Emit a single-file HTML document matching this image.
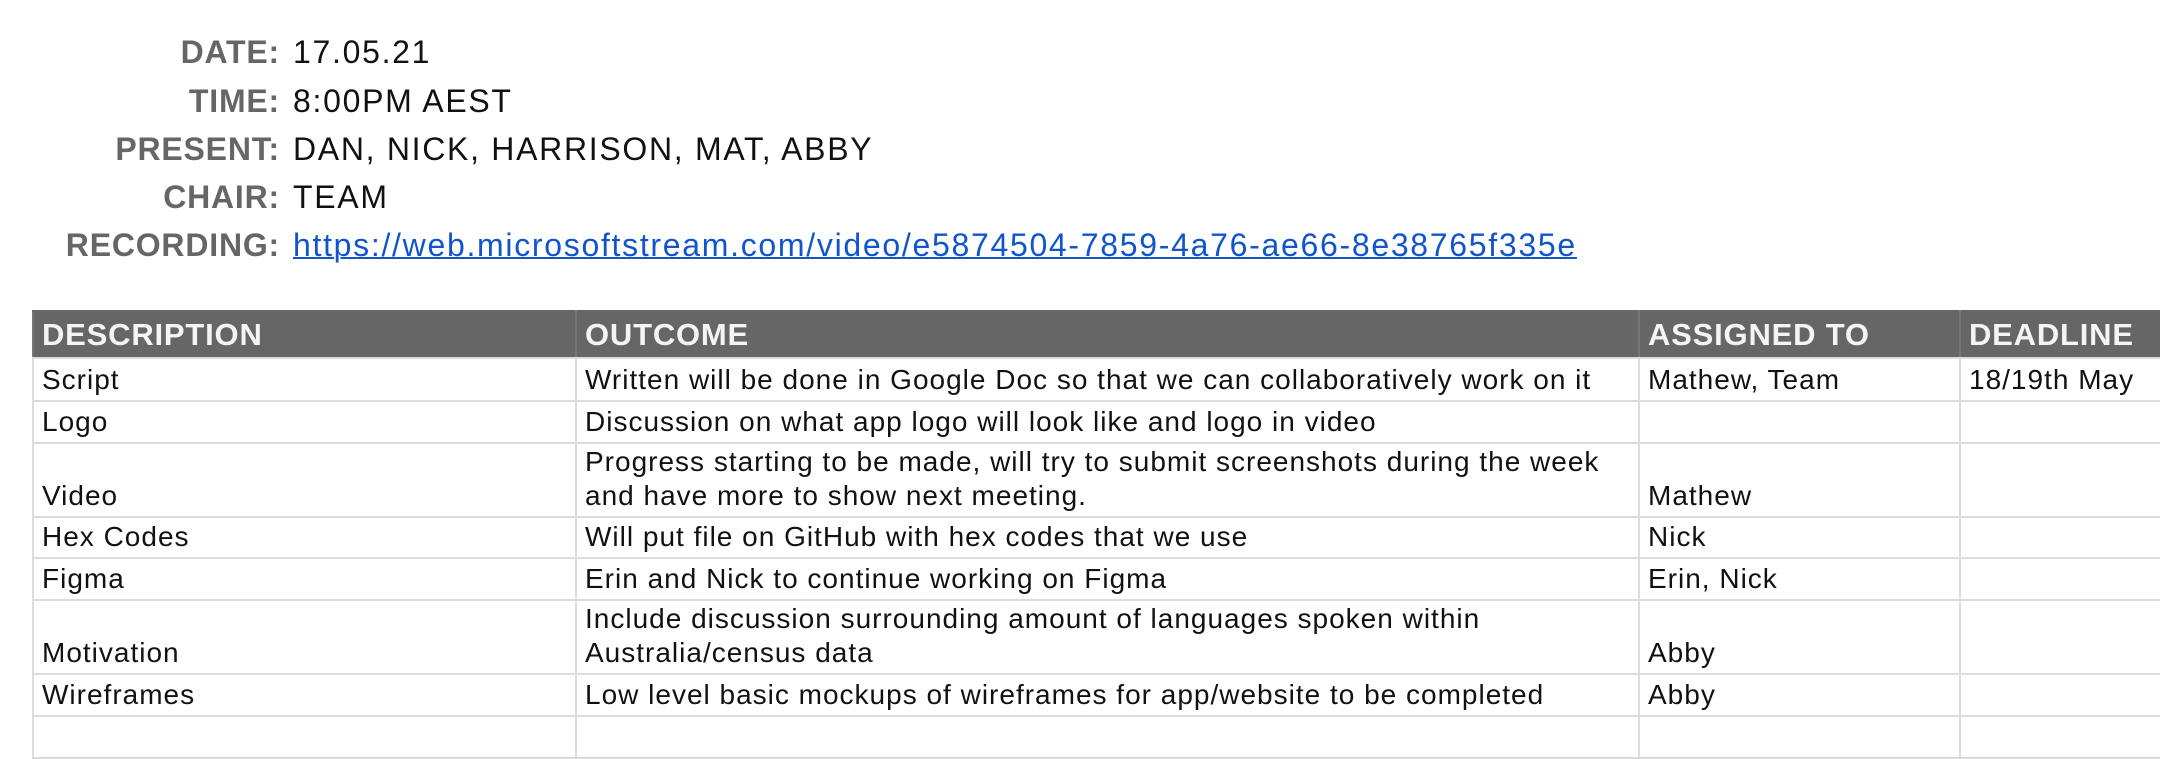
<!DOCTYPE html>
<html><head><meta charset="utf-8"><style>
html,body{margin:0;padding:0;background:#fff;width:2160px;height:726px;overflow:hidden;font-family:"Liberation Sans",sans-serif;}
.meta{position:absolute;left:0;width:2160px;height:48px;font-size:32px;line-height:48px;}
.meta .l{position:absolute;right:1880px;font-weight:bold;color:#666;white-space:nowrap;letter-spacing:0.8px}
.meta .v{position:absolute;left:293px;color:#111;white-space:nowrap;letter-spacing:1.7px}
.meta a{color:#1155cc;text-decoration:underline;text-decoration-thickness:2px;}
table{position:absolute;left:32px;top:310px;border-collapse:collapse;table-layout:fixed;width:2200px;}
td,th{border:2px solid #dcdcdc;padding:0 8px 3px 8px;vertical-align:bottom;font-size:28px;line-height:34px;color:#111;text-align:left;white-space:nowrap;overflow:hidden;letter-spacing:1px}
th{background:#666;color:#f4f4f4;font-weight:bold;font-size:31px;height:45px;border-color:#666 #777 #ddd #777;vertical-align:middle;padding-bottom:0;letter-spacing:0.8px}
</style></head><body>
<div class="meta" style="top:28px"><span class="l">DATE:</span><span class="v">17.05.21</span></div>
<div class="meta" style="top:77px"><span class="l">TIME:</span><span class="v">8:00PM AEST</span></div>
<div class="meta" style="top:125px"><span class="l">PRESENT:</span><span class="v">DAN, NICK, HARRISON, MAT, ABBY</span></div>
<div class="meta" style="top:173px"><span class="l">CHAIR:</span><span class="v">TEAM</span></div>
<div class="meta" style="top:221px"><span class="l">RECORDING:</span><span class="v"><a>https://web.microsoftstream.com/video/e5874504-7859-4a76-ae66-8e38765f335e</a></span></div>
<table>
<colgroup><col style="width:543px"><col style="width:1063px"><col style="width:321px"><col style="width:273px"></colgroup>
<tr><th>DESCRIPTION</th><th>OUTCOME</th><th>ASSIGNED TO</th><th>DEADLINE</th></tr>
<tr style="height:43px"><td>Script</td><td>Written will be done in Google Doc so that we can collaboratively work on it</td><td>Mathew, Team</td><td>18/19th May</td></tr>
<tr style="height:42px"><td>Logo</td><td>Discussion on what app logo will look like and logo in video</td><td></td><td></td></tr>
<tr style="height:74px"><td>Video</td><td>Progress starting to be made, will try to submit screenshots during the week<br>and have more to show next meeting.</td><td>Mathew</td><td></td></tr>
<tr style="height:41px"><td>Hex Codes</td><td>Will put file on GitHub with hex codes that we use</td><td>Nick</td><td></td></tr>
<tr style="height:42px"><td>Figma</td><td>Erin and Nick to continue working on Figma</td><td>Erin, Nick</td><td></td></tr>
<tr style="height:74px"><td>Motivation</td><td>Include discussion surrounding amount of languages spoken within<br>Australia/census data</td><td>Abby</td><td></td></tr>
<tr style="height:42px"><td>Wireframes</td><td>Low level basic mockups of wireframes for app/website to be completed</td><td>Abby</td><td></td></tr>
<tr style="height:42px"><td></td><td></td><td></td><td></td></tr>
</table>
</body></html>
